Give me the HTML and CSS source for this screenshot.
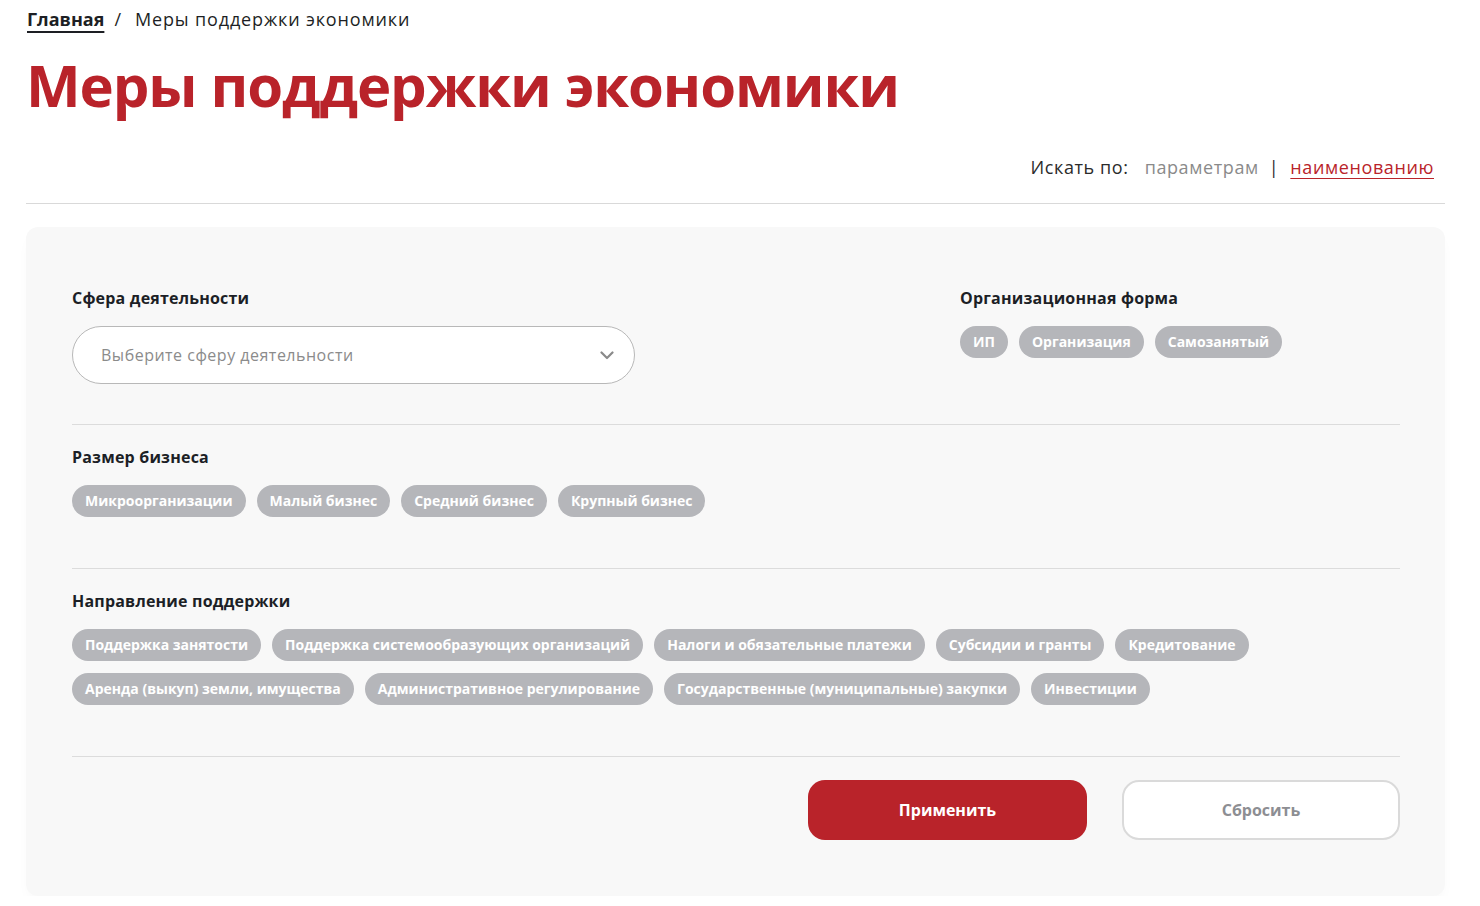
FILE: index.html
```html
<!DOCTYPE html>
<html lang="ru">
<head>
<meta charset="utf-8">
<title>Меры поддержки экономики</title>
<link rel="stylesheet" href="styles.css">
</head>
<body>
<div class="page">
  <nav class="crumbs">
    <a class="crumbs__link" href="#">Главная</a>
    <span class="crumbs__sep">/</span>
    <span class="crumbs__current">Меры поддержки экономики</span>
  </nav>

  <h1 class="page-title">Меры поддержки экономики</h1>

  <div class="search-mode">
    <span class="search-mode__label">Искать по:</span>
    <a class="search-mode__opt" href="#">параметрам</a>
    <span class="search-mode__sep">|</span>
    <a class="search-mode__opt search-mode__opt--active" href="#">наименованию</a>
  </div>

  <hr class="rule">

  <form class="filters">
    <div class="filters__row filters__row--split">
      <div class="field">
        <h3 class="field__title">Сфера деятельности</h3>
        <div class="select">
          <span class="select__placeholder">Выберите сферу деятельности</span>
          <svg class="select__arrow" width="14" height="9" viewBox="0 0 14 9"><polyline points="1.5,1.5 7,7 12.5,1.5" fill="none" stroke="#8a8a8a" stroke-width="2.2" stroke-linecap="round" stroke-linejoin="round"/></svg>
        </div>
      </div>
      <div class="field">
        <h3 class="field__title">Организационная форма</h3>
        <div class="chips">
          <button type="button" class="chip">ИП</button>
          <button type="button" class="chip">Организация</button>
          <button type="button" class="chip">Самозанятый</button>
        </div>
      </div>
    </div>

    <div class="filters__row">
      <h3 class="field__title">Размер бизнеса</h3>
      <div class="chips">
        <button type="button" class="chip">Микроорганизации</button>
        <button type="button" class="chip">Малый бизнес</button>
        <button type="button" class="chip">Средний бизнес</button>
        <button type="button" class="chip">Крупный бизнес</button>
      </div>
    </div>

    <div class="filters__row">
      <h3 class="field__title">Направление поддержки</h3>
      <div class="chips">
        <button type="button" class="chip">Поддержка занятости</button>
        <button type="button" class="chip">Поддержка системообразующих организаций</button>
        <button type="button" class="chip">Налоги и обязательные платежи</button>
        <button type="button" class="chip">Субсидии и гранты</button>
        <button type="button" class="chip">Кредитование</button>
        <button type="button" class="chip">Аренда (выкуп) земли, имущества</button>
        <button type="button" class="chip">Административное регулирование</button>
        <button type="button" class="chip">Государственные (муниципальные) закупки</button>
        <button type="button" class="chip">Инвестиции</button>
      </div>
    </div>

    <div class="filters__actions">
      <button type="submit" class="btn btn--primary">Применить</button>
      <button type="reset" class="btn btn--ghost">Сбросить</button>
    </div>
  </form>
</div>
</body>
</html>
```

FILE: styles.css
```css
* {
  box-sizing: border-box;
}

html, body {
  margin: 0;
  background: #ffffff;
}

body {
  font-family: "Open Sans", "Noto Sans", sans-serif;
  color: #1d1f24;
}

.page {
  padding: 0 35px 0 26px;
}

/* breadcrumbs */
.crumbs {
  padding-top: 7px;
  font-size: 18px;
  line-height: 24px;
  display: flex;
  align-items: baseline;
  color: #1d1f24;
}

.crumbs__link {
  color: #1d1f24;
  font-weight: 700;
  text-decoration: underline;
  text-decoration-thickness: 2px;
  text-underline-offset: 5px;
  margin-left: 1px;
}

.crumbs__sep {
  margin: 0 14px 0 10px;
}

.crumbs__current {
  letter-spacing: 0.85px;
}

/* heading */
.page-title {
  margin: 25px 0 0 0;
  font-size: 58px;
  line-height: 58px;
  font-weight: 700;
  letter-spacing: -1.1px;
  color: #b9232a;
}

/* search switch */
.search-mode {
  margin-top: 41px;
  padding-right: 11px;
  display: flex;
  justify-content: flex-end;
  align-items: baseline;
  font-size: 18px;
  line-height: 24px;
  letter-spacing: 0.6px;
}

.search-mode__label {
  color: #2b2b2b;
  margin-right: 16px;
}

.search-mode__opt {
  color: #8a8a8a;
  text-decoration: none;
}

.search-mode__opt--active {
  color: #b9232a;
  text-decoration: underline;
  text-underline-offset: 4px;
  text-decoration-thickness: 1px;
}

.search-mode__sep {
  color: #2b2b2b;
  margin: 0 11px 0 10px;
}

.rule {
  margin: 24px 0 0;
  border: 0;
  height: 1px;
  background: #d9d9d9;
}

/* filter card */
.filters {
  margin-top: 23px;
  padding: 38px 45px 56px 46px;
  background: #f8f8f8;
  border-radius: 12px;
  box-shadow: 0 8px 16px -6px rgba(0, 0, 0, 0.05);
}

.filters__row {
  padding: 22px 0 51px;
  border-top: 1px solid #dcdcdc;
}

.filters__row--split {
  display: grid;
  grid-template-columns: minmax(0, 1fr) 440px;
  padding: 23px 0 40px;
  border-top: 0;
}

.field__title {
  margin: 0 0 18px;
  font-size: 16px;
  line-height: 20px;
  font-weight: 700;
  letter-spacing: 0.2px;
  color: #1c1f26;
}

/* dropdown */
.select {
  width: 563px;
  height: 58px;
  border: 1px solid #b8b8b8;
  border-radius: 29px;
  background: #ffffff;
  display: flex;
  align-items: center;
  justify-content: space-between;
  padding: 0 20px 0 28px;
}

.select__placeholder {
  font-size: 16px;
  letter-spacing: 0.5px;
  color: #8b8b8b;
}

.select__arrow {
  display: block;
}

/* chips */
.chips {
  display: flex;
  flex-wrap: wrap;
  gap: 12px 11px;
}

.chip {
  height: 32px;
  padding: 0 13px;
  border: 0;
  border-radius: 16px;
  background: #b5b6ba;
  color: #ffffff;
  font-family: inherit;
  font-size: 14px;
  font-weight: 700;
  line-height: 32px;
  white-space: nowrap;
  cursor: pointer;
}

/* buttons */
.filters__actions {
  border-top: 1px solid #dcdcdc;
  padding-top: 23px;
  display: flex;
  justify-content: flex-end;
  gap: 35px;
}

.btn {
  height: 60px;
  border-radius: 17px;
  font-family: inherit;
  font-size: 16px;
  font-weight: 700;
  cursor: pointer;
}

.btn--primary {
  width: 279px;
  border: 0;
  background: #b9232a;
  color: #ffffff;
}

.btn--ghost {
  width: 278px;
  border: 2px solid #dadada;
  background: #ffffff;
  color: #8d8e93;
}
```
